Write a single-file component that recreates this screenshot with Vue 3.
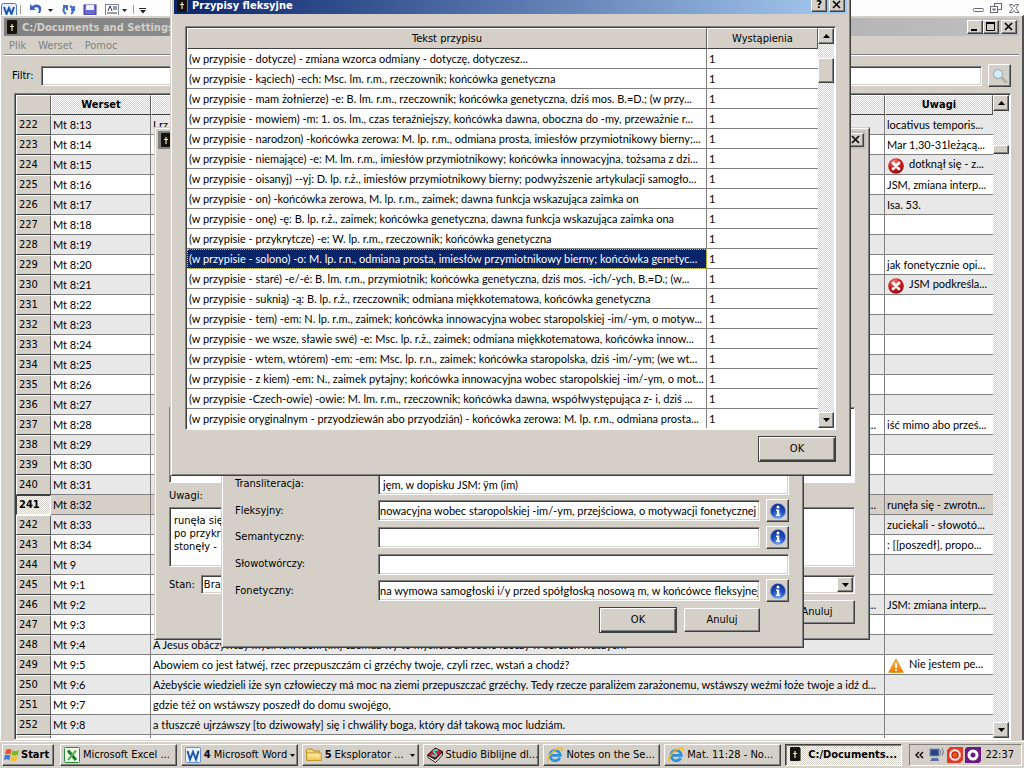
<script setup>
import { ref } from 'vue'

const filter = ref('')
const notes = ref([
  { t: '(w przypisie - dotycze) - zmiana wzorca odmiany - dotyczę, dotyczesz...' },
  { t: '(w przypisie - kąciech) -ech: Msc. lm. r.m., rzeczownik; końcówka genetyczna' },
  { t: '(w przypisie - mam żołnierze) -e: B. lm. r.m., rzeczownik; końcówka genetyczna, dziś mos. B.=D.; (w przy...' },
  { t: '(w przypisie - mowiem) -m: 1. os. lm., czas teraźniejszy, końcówka dawna, oboczna do -my, przeważnie r...' },
  { t: '(w przypisie - narodzon) -końcówka zerowa: M. lp. r.m., odmiana prosta, imiesłów przymiotnikowy bierny;...' },
  { t: '(w przypisie - niemające) -e: M. lm. r.m., imiesłów przymiotnikowy; końcówka innowacyjna, tożsama z dzi...' },
  { t: '(w przypisie - oisanyj) --yj: D. lp. r.ż., imiesłów przymiotnikowy bierny; podwyższenie artykulacji samogło...' },
  { t: '(w przypisie - on) -końcówka zerowa, M. lp. r.m., zaimek; dawna funkcja wskazująca zaimka on' },
  { t: '(w przypisie - onę) -ę: B. lp. r.ż., zaimek; końcówka genetyczna, dawna funkcja wskazująca zaimka ona' },
  { t: '(w przypisie - przykrytcze) -e: W. lp. r.m., rzeczownik; końcówka genetyczna' },
  { t: '(w przypisie - solono) -o: M. lp. r.n., odmiana prosta, imiesłów przymiotnikowy bierny; końcówka genetyc...', sel: true },
  { t: '(w przypisie - staré) -e/-é: B. lm. r.m., przymiotnik; końcówka genetyczna, dziś mos. -ich/-ych, B.=D.; (w...' },
  { t: '(w przypisie - suknią) -ą: B. lp. r.ż., rzeczownik; odmiana miękkotematowa, końcówka genetyczna' },
  { t: '(w przypisie - tem) -em: N. lp. r.m., zaimek; końcówka innowacyjna wobec staropolskiej -im/-ym, o motyw...' },
  { t: '(w przypisie - we wsze, sławie swé) -e: Msc. lp. r.ż., zaimek; odmiana miękkotematowa, końcówka innow...' },
  { t: '(w przypisie - wtem, wtórem) -em: -em: Msc. lp. r.n., zaimek; końcówka staropolska, dziś -im/-ym; (we wt...' },
  { t: '(w przypisie - z kiem) -em: N., zaimek pytajny; końcówka innowacyjna wobec staropolskiej -im/-ym, o mot...' },
  { t: '(w przypisie -Czech-owie) -owie: M. lm. r.m., rzeczownik; końcówka dawna, współwystępująca z- i, dziś ...' },
  { t: '(w przypisie oryginalnym - przyodziewán abo przyodzián) - końcówka zerowa: M. lp. r.m., odmiana prosta...' },
])

const verses = [
  { n: 222, v: 'Mt 8:13', t: 'I rz', u: 'locativus temporis...' },
  { n: 223, v: 'Mt 8:14', u: 'Mar 1,30-31leżącą...' },
  { n: 224, v: 'Mt 8:15', u: 'dotknął się - z...', i: 'err' },
  { n: 225, v: 'Mt 8:16', u: 'JSM, zmiana interp...' },
  { n: 226, v: 'Mt 8:17', u: 'Isa. 53.' },
  { n: 227, v: 'Mt 8:18' },
  { n: 228, v: 'Mt 8:19' },
  { n: 229, v: 'Mt 8:20', u: 'jak fonetycznie opi...' },
  { n: 230, v: 'Mt 8:21', u: 'JSM podkreśla...', i: 'err' },
  { n: 231, v: 'Mt 8:22' },
  { n: 232, v: 'Mt 8:23' },
  { n: 233, v: 'Mt 8:24' },
  { n: 234, v: 'Mt 8:25' },
  { n: 235, v: 'Mt 8:26' },
  { n: 236, v: 'Mt 8:27' },
  { n: 237, v: 'Mt 8:28', t: '...', r: true, u: 'iść mimo abo prześ...' },
  { n: 238, v: 'Mt 8:29' },
  { n: 239, v: 'Mt 8:30' },
  { n: 240, v: 'Mt 8:31' },
  { n: 241, v: 'Mt 8:32', t: '...', r: true, u: 'runęła się - zwrotn...', sel: true },
  { n: 242, v: 'Mt 8:33', u: 'zuciekali - słowotó...' },
  { n: 243, v: 'Mt 8:34', u: ': [[poszedł], propo...' },
  { n: 244, v: 'Mt 9' },
  { n: 245, v: 'Mt 9:1' },
  { n: 246, v: 'Mt 9:2', t: '...', r: true, u: 'JSM: zmiana interp...' },
  { n: 247, v: 'Mt 9:3' },
  { n: 248, v: 'Mt 9:4', t: 'A Jesus obáczywszy myśli ich, rzekł [im] czemuż wy to myślicie źle sobie rzeczy w sercach waszych?' },
  { n: 249, v: 'Mt 9:5', t: 'Abowiem co jest łatwéj, rzec przepuszczám ci grzéchy twoje, czyli rzec, wstań a chodź?', u: 'Nie jestem pe...', i: 'warn' },
  { n: 250, v: 'Mt 9:6', t: 'Ażebyście wiedzieli iże syn człowieczy má moc na ziemi przepuszczać grzéchy. Tedy rzecze paraliżem zarażonemu, wstáwszy weźmi łoże twoje a idź d...' },
  { n: 251, v: 'Mt 9:7', t: 'gdzie téż on wstáwszy poszedł do domu swojégo,' },
  { n: 252, v: 'Mt 9:8', t: 'a tłuszczé ujrzáwszy [to dziwowały] się i chwáliły boga, który dáł takową moc ludziám.' },
  { n: '', v: '' },
]

const fields = ref([
  { id: 'trans', label: 'Transliteracja:', value: 'jęm, w dopisku JSM: ÿm (im)', pad: true },
  { id: 'fleks', label: 'Fleksyjny:', value: 'nowacyjna wobec staropolskiej -im/-ym, przejściowa, o motywacji fonetycznej', info: true },
  { id: 'seman', label: 'Semantyczny:', value: '', info: true },
  { id: 'slowo', label: 'Słowotwórczy:', value: '' },
  { id: 'fonet', label: 'Fonetyczny:', value: 'na wymowa samogłoski i/y przed spółgłoską nosową m, w końcówce fleksyjnej', info: true },
])

const remarks = ref('runęła się\npo przykrym\nstonęły - ')

const tasks = [
  { icon: 'excel', text: 'Microsoft Excel ...' },
  { icon: 'word', count: '4', text: 'Microsoft Word', drop: true },
  { icon: 'folder', count: '5', text: 'Eksplorator ...', drop: true },
  { icon: 'studio', text: 'Studio Biblijne dl...' },
  { icon: 'ie', text: 'Notes on the Se...' },
  { icon: 'ie', text: 'Mat. 11:28 - No...' },
  { icon: 'cross', text: 'C:/Documents...', active: true },
]
</script>

<template>
  <div class="desktop">
    <svg class="defs" width="0" height="0" aria-hidden="true">
      <defs>
        <radialGradient id="gRed" cx=".4" cy=".25" r=".8"><stop offset="0" stop-color="#f08080" /><stop offset=".5" stop-color="#cc2222" /><stop offset="1" stop-color="#8c0808" /></radialGradient>
        <radialGradient id="gBlue" cx=".5" cy=".9" r=".9"><stop offset="0" stop-color="#6fa8f4" /><stop offset=".5" stop-color="#1f4fc4" /><stop offset="1" stop-color="#12308c" /></radialGradient>
        <linearGradient id="gOrange" x2="0" y2="1"><stop offset="0" stop-color="#ffc04a" /><stop offset="1" stop-color="#f07800" /></linearGradient>
        <linearGradient id="gFolder" x2="0" y2="1"><stop offset="0" stop-color="#fff2b0" /><stop offset="1" stop-color="#eec34c" /></linearGradient>
      </defs>
      <symbol id="cross" viewBox="0 0 16 16"><rect x="1" y="0" width="10" height="14" rx="1" fill="#16120e" /><rect x="11" y="1" width="1" height="13" fill="#77736a" /><path d="M6 4v7M4 6.500h4" stroke="#f4e6b8" stroke-width="1.200" /></symbol>
      <symbol id="err" viewBox="0 0 16 16"><circle cx="8" cy="8" r="7.8" fill="url(#gRed)" /><path d="M5 5l6 6M11 5l-6 6" stroke="#fff" stroke-width="2.8" stroke-linecap="round" /></symbol>
      <symbol id="warn" viewBox="0 0 16 16"><path d="M8 1.2L15.2 14.3H.8z" fill="url(#gOrange)" stroke="#e88a10" stroke-linejoin="round" /><path d="M8 5v5M8 11.4v1.6" stroke="#fff" stroke-width="2" /></symbol>
      <symbol id="info" viewBox="0 0 16 16"><circle cx="8" cy="8" r="7.6" fill="url(#gBlue)" stroke="#8ba4d8" stroke-width=".6" /><circle cx="8" cy="4" r="1.5" fill="#fff" /><path d="M6 6.6h3.2v5H10V13H6v-1.400h1V8H6z" fill="#fff" /></symbol>
      <symbol id="excel" viewBox="0 0 16 16"><rect x=".5" y=".5" width="15" height="15" rx="1" fill="#f2faf0" stroke="#2f8a3c" /><path d="M4 3.500l8 9.500" stroke="#1d7a2c" stroke-width="3" /><path d="M12 3.500l-8 9.500" stroke="#5fb24a" stroke-width="2.200" /></symbol>
      <symbol id="word" viewBox="0 0 16 16"><rect x=".5" y=".5" width="15" height="15" rx="1" fill="#eaf2fc" stroke="#6b8fc8" /><path d="M2.500 4l2.500 8.500L8 5l3 7.500L13.500 4" fill="none" stroke="#1d55ac" stroke-width="2" /></symbol>
      <symbol id="folder" viewBox="0 0 16 16"><path d="M.5 13.500v-10l1-1.500h4.500l1.500 2h6v2" fill="#f6d774" stroke="#b98d1c" /><path d="M.7 13.500V6h14.600v7.500z" fill="url(#gFolder)" stroke="#c0952a" /></symbol>
      <symbol id="studio" viewBox="0 0 16 16"><path d="M1 10.500L8.500 15.500 15.500 8V5L8 12.500 1 8z" fill="#e8e4dc" stroke="#222" /><path d="M.5 8L8 1l7.500 3.500L8.500 12z" fill="#c01c38" stroke="#300" /><path d="M11 3.500C7 2 5 4.500 8 6s1 4-3.500 2" fill="none" stroke="#39e0c8" stroke-width="1.800" /></symbol>
      <symbol id="ie" viewBox="0 0 16 16"><path d="M12.800 10.800A5.200 5.200 0 1 1 13.300 8.400H4" fill="none" stroke="#2b8fdc" stroke-width="2.700" /><path d="M1.500 15C-1 12.500 4 5 9 2.500S16 .5 14.500 4" fill="none" stroke="#f2b824" stroke-width="1.500" /></symbol>
      <symbol id="win" viewBox="0 0 16 16"><path d="M2 3c2-1.500 4-1 5.500 0l-1 4.500C5 6.500 3 6.300 1 7.500z" fill="#e8502c" /><path d="M8.500 3.200c2 1.200 4 1 6.500 0l-1.200 4.600c-2 1-4.300 1-6.200-.1z" fill="#76b82a" /><path d="M.8 8.500c2-1.200 4-1 5.500 0l-1 4.500c-1.500-1-3.500-1-5.300 0z" fill="#3b78d8" /><path d="M7.300 8.800c2 1.200 4 1 6.300 0l-1.200 4.500c-2 1-4.300 1-6.200-.1z" fill="#f8c020" /></symbol>
    </svg>

    <header class="word-strip">
      <svg width="200" height="16" viewBox="0 0 200 16" aria-hidden="true">
        <rect x="1.500" y="3.500" width="15" height="14" rx="2" fill="#e6effb" stroke="#4a7cc0" /><path d="M4 7l2.500 7L9 8l2.500 6L14 7" fill="none" stroke="#1d55ac" stroke-width="2" />
        <path d="M20.500 5v9M133.500 5v9" stroke="#9aa0a8" />
        <path d="M30 4v6h6l-2-2c4-2 6 1 4 5h2c4-7-2-11-8-7z" fill="#3b62c8" />
        <path d="M48 9h5l-2.500 3z" fill="#222" />
        <path d="M66 14c-4-3-3-7 1-8M63 6h4v4M70 6c4 2 4 6 1 8M74 6v4h-3" fill="none" stroke="#3d6fd0" stroke-width="2" />
        <rect x="84" y="5" width="12" height="10" fill="#6a6ad0" stroke="#3838a0" /><rect x="86" y="5" width="8" height="5" fill="#eef" />
        <rect x="105.500" y="4.500" width="13" height="11" fill="#fff" stroke="#7788a8" /><path d="M108 11l2-5 2 5M113 7h4M113 9h4M107 13h10" stroke="#335" fill="none" />
        <path d="M122 9h5l-2.500 3zM140 10h6l-3 3.500z" fill="#222" /><path d="M139 8.500h7" stroke="#222" />
      </svg>
      <svg width="50" height="14" viewBox="0 0 50 14" fill="#fff" stroke="#667" aria-hidden="true">
        <rect x="1.500" y="8.500" width="10" height="3" rx="1" /><rect x="22.500" y="3.500" width="7" height="6" /><rect x="18.500" y="6.500" width="7" height="6" /><rect x="21" y="9" width="2" height="1" />
        <path d="M37.500 4.500h3l1.500 2 1.500-2h3L44 8.500l3 4h-3.500L42 10.500l-1.500 2h-3l3-4z" />
      </svg>
    </header>

    <main class="app">
      <div class="title inactive">
        <svg width="16" height="14"><use href="#cross" width="16" height="16" /></svg>
        <span class="cap">C:/Documents and Settings</span>
        <button class="cb" aria-label="Minimalizuj"><svg width="12" height="10"><path d="M2 8h6" stroke="#000" stroke-width="2" /></svg></button>
        <button class="cb" aria-label="Maksymalizuj"><svg width="12" height="10"><path d="M1.500 1v7.500h8V1M1 1h9" fill="none" stroke="#000" /><path d="M1 1h9" stroke="#000" stroke-width="2" /></svg></button>
        <button class="cb last" aria-label="Zamknij"><svg width="12" height="10"><path d="M2 1l7 7M9 1L2 8" stroke="#000" stroke-width="1.600" /></svg></button>
      </div>
      <nav class="menu"><a href="#plik">Plik</a><a href="#werset">Werset</a><a href="#pomoc">Pomoc</a></nav>
      <div class="filter">
        <label for="filtr">Filtr:</label>
        <input id="filtr" v-model="filter" type="text" class="sunk">
        <button class="tool" aria-label="Szukaj"><svg width="16" height="16" viewBox="0 0 16 16"><path d="M9 9l5 5" stroke="#b0b0a8" stroke-width="2.500" stroke-linecap="round" /><circle cx="6" cy="6" r="4.500" fill="#d8ecf8" stroke="#a8b4bc" stroke-width="1.300" /></svg></button>
      </div>
      <div class="frame grid">
        <div class="clip">
          <table class="verses">
            <colgroup><col class="c-num"><col class="c-ver"><col><col class="c-uw"></colgroup>
            <thead><tr><th class="corner"></th><th>Werset</th><th></th><th>Uwagi</th></tr></thead>
            <tbody>
              <tr v-for="(r, k) in verses" :key="k" :class="{ sel: r.sel }">
                <th scope="row">{{ r.n }}</th><td>{{ r.v }}</td><td :class="{ end: r.r }">{{ r.t }}</td>
                <td><svg v-if="r.i" width="16" height="16"><use :href="'#' + r.i" /></svg>{{ r.u }}</td>
              </tr>
            </tbody>
          </table>
        </div>
        <div class="scroll">
          <button aria-label="W górę"><svg width="7" height="4"><path d="M0 4h7L3.500 0z" /></svg></button>
          <div class="track main-track"><div class="thumb"></div></div>
          <button aria-label="W dół"><svg width="7" height="4"><path d="M0 0h7L3.500 4z" /></svg></button>
        </div>
      </div>
    </main>

    <footer class="taskbar">
      <button class="task start"><svg width="16" height="16"><use href="#win" /></svg>Start</button>
      <div class="tasks">
        <button v-for="(t, k) in tasks" :key="k" class="task" :class="{ active: t.active }">
          <svg width="16" height="16"><use :href="'#' + t.icon" /></svg>
          <b v-if="t.count">{{ t.count }}</b><span>{{ t.text }}</span>
          <svg v-if="t.drop" class="drop" width="5" height="3"><path d="M0 0h5L2.500 3z" /></svg>
        </button>
      </div>
      <div class="tray">
        <svg class="chev" width="9" height="8"><path d="M4 1L1 4l3 3M8 1L5 4l3 3" fill="none" stroke="#000" stroke-width="1.400" /></svg>
        <svg width="16" height="16" viewBox="0 0 16 16"><rect x="1" y="2" width="9" height="7" fill="#2c4484" stroke="#8090b8" /><path d="M3 11h6l1 3H1z" fill="#5870a0" /><path d="M11 3q2 2 0 5M13 1q3 4 0 8" fill="none" stroke="#778" /></svg>
        <svg width="16" height="16" viewBox="0 0 16 16"><path d="M3 0h13v13l-3 3H0V3z" fill="#e03c2c" /><circle cx="8" cy="8" r="5.500" fill="#fff" stroke="#f8b8a0" /><circle cx="8" cy="8" r="3" fill="#e85a20" stroke="#d02818" stroke-width="1.500" /></svg>
        <svg width="16" height="16" viewBox="0 0 16 16"><path d="M2 0h14v14l-2 2H0V2z" fill="#6a1a80" /><circle cx="8" cy="8" r="4" fill="none" stroke="#fff" stroke-width="3" /></svg>
        <time>22:37</time>
      </div>
    </footer>

    <section class="win edit" aria-label="Edycja wersetu">
      <div class="title inactive"><svg width="16" height="14"><use href="#cross" width="16" height="16" /></svg><span class="cap"></span><button class="cb last" aria-label="Zamknij"><svg width="12" height="10"><path d="M2 1l7 7M9 1L2 8" stroke="#000" stroke-width="1.600" /></svg></button></div>
      <div class="edit-body">
        <div class="frame pane"></div>
        <label for="uwagi">Uwagi:</label>
        <textarea id="uwagi" v-model="remarks" class="sunk"></textarea>
        <div class="state"><label for="stan">Stan:</label>
          <div class="combo sunk"><select id="stan"><option>Brak</option></select><span class="cb arrow"><svg width="7" height="4"><path d="M0 0h7L3.500 4z" /></svg></span></div>
        </div>
        <div class="actions"><button class="btn">Anuluj</button></div>
      </div>
    </section>

    <section class="win notes" aria-label="Przypis">
      <div v-for="f in fields" :key="f.id" class="field">
        <label :for="f.id">{{ f.label }}</label>
        <input :id="f.id" v-model="f.value" type="text" class="sunk" :class="{ padded: f.pad }">
        <button v-if="f.info" class="tool" :aria-label="'Lista: ' + f.label"><svg width="16" height="16"><use href="#info" /></svg></button>
      </div>
      <div class="actions"><button class="btn def">OK</button><button class="btn">Anuluj</button></div>
    </section>

    <section class="win list" aria-label="Przypisy fleksyjne">
      <div class="title"><svg width="16" height="14"><use href="#cross" width="16" height="16" /></svg><span class="cap">Przypisy fleksyjne</span>
        <button class="cb" aria-label="Pomoc"><b>?</b></button>
        <button class="cb last" aria-label="Zamknij"><svg width="12" height="10"><path d="M2 1l7 7M9 1L2 8" stroke="#000" stroke-width="1.600" /></svg></button>
      </div>
      <div class="frame list-grid">
        <div class="clip">
          <table class="foot">
            <colgroup><col><col class="c-count"></colgroup>
            <thead><tr><th>Tekst przypisu</th><th>Wystąpienia</th></tr></thead>
            <tbody><tr v-for="(n, k) in notes" :key="k"><td :class="{ picked: n.sel }">{{ n.t }}</td><td>1</td></tr></tbody>
          </table>
        </div>
        <div class="scroll">
          <button aria-label="W górę"><svg width="7" height="4"><path d="M0 4h7L3.500 0z" /></svg></button>
          <div class="track list-track"><div class="thumb"></div></div>
          <button aria-label="W dół"><svg width="7" height="4"><path d="M0 0h7L3.500 4z" /></svg></button>
        </div>
      </div>
      <div class="actions"><button class="btn def">OK</button></div>
    </section>
  </div>
</template>

<style>
html, body { margin: 0; overflow: hidden; }
</style>

<style scoped>
* { box-sizing: border-box; }
.desktop { position: relative; height: 100vh; overflow: hidden; display: flex; flex-direction: column; background: #d4d0c8; color: #000; font: 11px/14px "DejaVu Sans Condensed", "DejaVu Sans", sans-serif; }
.defs { position: absolute; }
button, input, textarea, select { font: inherit; color: inherit; margin: 0; border-radius: 0; }
svg { flex: none; }
.verses td, .foot td, .notes input { font-family: Lato, "Liberation Sans", sans-serif; }
.word-strip { flex: none; height: 15px; overflow: hidden; background: #fdfdfe; display: flex; justify-content: space-between; padding-right: 2px; }
.app { flex: 1; min-height: 0; display: flex; flex-direction: column; background: #d4d0c8; border-top: 1px solid #fff; border-left: 1px solid #fff; border-right: 2px solid #505050; padding: 2px 3px 0; }
.title { flex: none; height: 18px; display: flex; align-items: center; padding: 0 2px; background: linear-gradient(90deg, #0a246a, #a6caf0); color: #fff; font-weight: bold; }
.title.inactive { background: linear-gradient(90deg, #808080, #c0c0c0); color: #d4d0c8; }
.cap { flex: 1; padding-top: 1px; white-space: nowrap; overflow: hidden; }
.cb { width: 16px; height: 14px; padding: 0; display: flex; align-items: center; justify-content: center; background: #d4d0c8; color: #000; border: 1px solid; border-color: #fff #404040 #404040 #fff; box-shadow: inset -1px -1px #808080; }
.cb.last { margin-left: 2px; }
.menu { flex: none; height: 19px; display: flex; gap: 12px; padding: 3px 5px; border-bottom: 1px solid #808080; box-shadow: 0 1px #fff; }
.menu a { color: #808080; text-decoration: none; }
.filter { flex: none; display: flex; align-items: center; padding: 9px 8px 0; }
.filter input { flex: 1; height: 20px; margin: 0 6px 0 8px; }
.sunk { min-width: 0; background: #fff; border: 1px solid; border-color: #808080 #fff #fff #808080; box-shadow: inset 1px 1px #404040, inset -1px -1px #d4d0c8; padding: 0 1px; outline: 0; }
.tool { flex: none; width: 23px; height: 23px; padding: 0; display: flex; align-items: center; justify-content: center; background: #d4d0c8; border: 1px solid; border-color: #fff #404040 #404040 #fff; box-shadow: inset -1px -1px #808080; }
.frame { display: flex; border: 1px solid; border-color: #808080 #fff #fff #808080; box-shadow: inset 1px 1px #404040; padding: 1px; background: #fff; }
.grid { flex: 1; min-height: 0; margin: 6px 8px 0 10px; }
.clip { flex: 1; min-width: 0; overflow: hidden; }
table { width: 100%; table-layout: fixed; border-collapse: separate; border-spacing: 0; }
.c-num { width: 35px; } .c-ver { width: 100px; } .c-uw { width: 108px; } .c-count { width: 111px; }
th, td { height: 20px; padding: 0 2px; line-height: 18px; text-align: left; white-space: nowrap; overflow: hidden; }
td { border-right: 1px solid #808080; border-bottom: 1px solid #808080; }
td:last-child { border-right: 0; }
td svg { vertical-align: middle; margin: 0 5px 0 1px; }
th { font-weight: normal; background: #d4d0c8; border: 1px solid; border-color: #fff #606060 #404040 #fff; }
.verses thead th { text-align: center; font-weight: bold; background: repeating-conic-gradient(#d4d0c8 0 25%, #fff 0 50%) 0 0 / 2px 2px; }
.verses thead .corner { background: #d4d0c8; }
.verses tbody tr:nth-child(odd) td { background: #e8e8e8; }
.verses tbody tr.sel td { background: #d4d0c8; }
.verses .sel th { font-weight: bold; border-color: #404040 #fff #fff #404040; background: repeating-conic-gradient(#d4d0c8 0 25%, #fff 0 50%) 0 0 / 2px 2px; }
.end { text-align: right; padding-right: 8px; }
.foot thead th { height: 21px; text-align: center; }
.picked { background: #0a246a; color: #fff; outline: 1px dotted #d0d060; outline-offset: -1px; }
.scroll { flex: none; width: 16px; display: flex; flex-direction: column; background: repeating-conic-gradient(#d4d0c8 0 25%, #fff 0 50%) 0 0 / 2px 2px; }
.scroll button, .thumb { flex: none; height: 16px; padding: 0; display: flex; align-items: center; justify-content: center; background: #d4d0c8; border: 1px solid; border-color: #fff #404040 #404040 #fff; box-shadow: inset -1px -1px #808080; }
.track { flex: 1; min-height: 0; }
.main-track { padding-top: 34px; } .main-track .thumb { height: 9px; }
.list-track { padding-top: 14px; } .list-track .thumb { height: 25px; }
.taskbar { flex: none; height: 28px; display: flex; padding: 3px 2px 2px; border-top: 1px solid #d4d0c8; box-shadow: inset 0 1px #fff; background: #d4d0c8; }
.tasks { flex: 1; min-width: 0; display: flex; gap: 4px; margin: 0 7px 0 6px; }
.task { flex: 1; min-width: 0; height: 22px; display: flex; align-items: center; gap: 3px; padding: 0 3px; background: #d4d0c8; border: 1px solid; border-color: #fff #404040 #404040 #fff; box-shadow: inset -1px -1px #808080; white-space: nowrap; overflow: hidden; }
.task.start { flex: none; width: 52px; padding: 0 1px; gap: 1px; font-weight: bold; }
.task.active { font-weight: bold; border-color: #404040 #fff #fff #404040; box-shadow: inset 1px 1px #808080; background: repeating-conic-gradient(#d4d0c8 0 25%, #fff 0 50%) 0 0 / 2px 2px; }
.drop { margin-left: auto; }
.tray { flex: none; width: 113px; height: 22px; display: flex; align-items: center; gap: 2px; padding: 0 7px 0 5px; border: 1px solid; border-color: #808080 #fff #fff #808080; }
.chev { margin-right: 3px; }
.tray time { margin-left: auto; }
.win { position: absolute; display: flex; flex-direction: column; background: #d4d0c8; border: 1px solid; border-color: #d4d0c8 #404040 #404040 #d4d0c8; box-shadow: inset 1px 1px #fff, inset -1px -1px #808080; padding: 3px; }
.edit { left: 154px; top: 127px; width: 716px; height: 513px; }
.edit-body { flex: 1; display: flex; flex-direction: column; justify-content: flex-end; padding: 0 11px 12px; }
.pane { height: 76px; margin-bottom: 6px; }
.edit-body textarea { height: 60px; margin: 4px 0 8px; padding: 6px 4px; line-height: 13px; resize: none; }
.state { display: flex; align-items: center; gap: 6px; }
.combo { flex: 1; display: flex; height: 19px; padding: 1px; }
.combo select { flex: 1; border: 0; background: none; appearance: none; outline: 0; padding: 0 1px; }
.arrow { height: 15px; }
.actions { display: flex; justify-content: flex-end; gap: 7px; }
.btn { width: 76px; height: 24px; padding: 0; background: #d4d0c8; border: 1px solid; border-color: #fff #404040 #404040 #fff; box-shadow: inset -1px -1px #808080; }
.btn.def { width: 78px; height: 26px; border-color: #404040; box-shadow: inset 1px 1px #fff, inset -1px -1px #404040, inset -2px -2px #808080; }
.edit .actions { margin-top: 6px; }
.notes { left: 221px; top: 440px; width: 583px; height: 208px; padding: 30px 14px 14px 13px; }
.field { display: flex; align-items: center; height: 27px; }
.field label { width: 143px; }
.field input { flex: 1; height: 21px; }
.field input.padded { padding-left: 4px; }
.field .tool { margin-left: 6px; }
.notes .actions { margin: 3px 29px 0 0; align-items: center; }
.list { left: 170px; top: -8px; width: 681px; height: 484px; }
.list-grid { margin: 12px 11px 0; height: 404px; }
.list .actions { margin: 6px 11px 0; }
</style>
